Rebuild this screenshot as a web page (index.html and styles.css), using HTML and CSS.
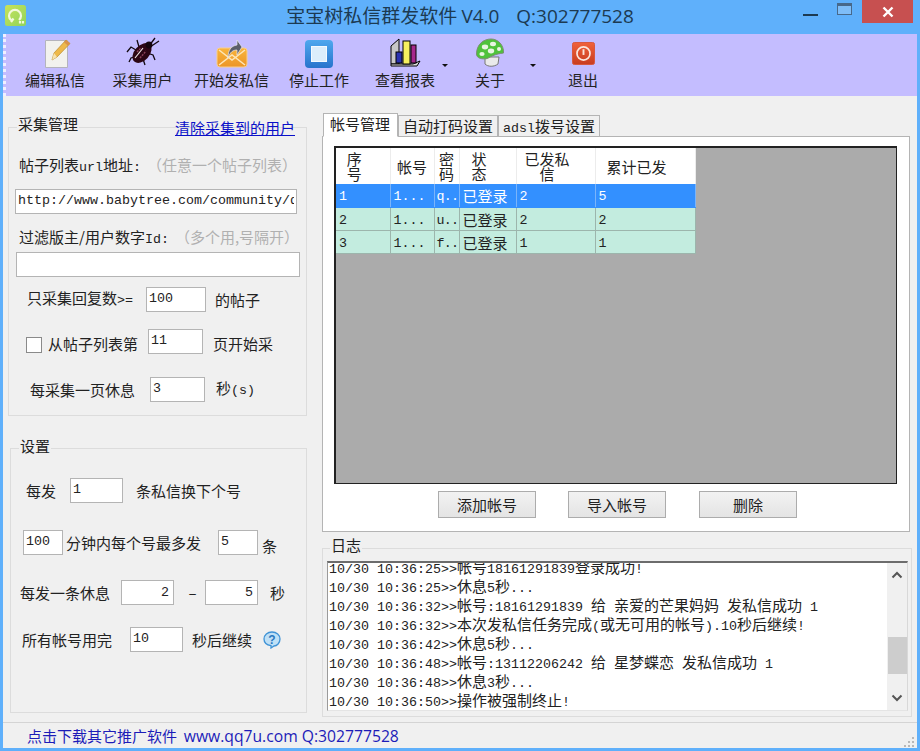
FILE: index.html
```html
<!DOCTYPE html>
<html lang="zh-CN">
<head>
<meta charset="utf-8">
<title>宝宝树私信群发软件</title>
<link rel="stylesheet" href="styles.css">
</head>
<body>
<div class="window">
  <header class="titlebar">
    <svg class="app-logo" width="21" height="21" viewBox="0 0 21 21"><defs><linearGradient id="lg" x1="0" y1="0" x2="1" y2="1"><stop offset="0" stop-color="#c9e35c"/><stop offset="1" stop-color="#8fd45a"/></linearGradient></defs><rect width="21" height="21" rx="2.500" fill="url(#lg)"/><path d="M6 15a6 5.800 0 1 1 8 0M8.500 13.500L6 17M15 16v2.500M18 16v2.500" fill="none" stroke="#f2f9dc" stroke-width="2.200"/></svg>
    <div class="title">宝宝树私信群发软件 <span class="title-latin">V4.0&nbsp; Q:302777528</span></div>
    <div class="win-btns">
      <span class="win-min"></span>
      <span class="win-max"></span>
      <span class="win-close"><svg width="12" height="12" viewBox="0 0 12 12"><path d="M1.500 1.500l9 9M10.500 1.500l-9 9" stroke="#fff" stroke-width="2.400"/></svg></span>
    </div>
  </header>

  <nav class="toolbar">
    <div class="tool">
      <svg class="ico" width="32" height="30" viewBox="0 0 32 30"><path d="M6.500 2.500h22v27h-22z" fill="#f2f2ee" stroke="#b4b4bc"/><path d="M13 22l2-7L27 2l4 3.500L18 19z" fill="#eeb94a" stroke="#b98a2c" stroke-width=".7"/><path d="M27 2l4 3.500-2 2.200-4-3.500z" fill="#d9924a"/><path d="M13 22l2-7 3 4z" fill="#f6e3b0"/></svg>
      <span>编辑私信</span>
    </div>
    <div class="tool">
      <svg class="ico" width="36" height="31" viewBox="0 0 36 31"><g stroke="#120810" stroke-width="1.300" fill="none"><path d="M24 9l6-8M25 10l9-6M11 13l-5-3-4 5M12 19l-6 2-2 4M18 22l2 6M22 16l6 2 2 5M14 10l-2-7"/></g><ellipse cx="17" cy="16" rx="7.500" ry="11.500" transform="rotate(42 17 16)" fill="#2c0614"/><circle cx="24" cy="8" r="3.400" fill="#14060c"/><path d="M10 21l8-10" stroke="#f0e6e6" stroke-width="1.200"/><path d="M15 21l6-7M12 15l4-4" stroke="#8a4058" stroke-width="1.400" stroke-dasharray="2 1"/></svg>
      <span>采集用户</span>
    </div>
    <div class="tool">
      <svg class="ico" width="32" height="30" viewBox="0 0 32 30"><defs><linearGradient id="eb" x1="0" y1="0" x2="0" y2="1"><stop offset="0" stop-color="#f9b53c"/><stop offset="1" stop-color="#ec9526"/></linearGradient></defs><rect x="1" y="10" width="30" height="19" rx="3" fill="url(#eb)" stroke="#f8cf8e"/><path d="M3 27l13-10 13 10M3 12l13 10 13-10" fill="none" stroke="#fde6b8" stroke-width="1.500"/><path d="M12 20c0-8 3-12 9-13V2l5 7-5 8v-5c-4 0-7 2-9 8z" fill="#5b5f6b" stroke="#e9e9f2" stroke-width=".7"/></svg>
      <span>开始发私信</span>
    </div>
    <div class="tool">
      <svg class="ico" width="28" height="28" viewBox="0 0 28 28"><defs><linearGradient id="sb" x1="0" y1="0" x2="0" y2="1"><stop offset="0" stop-color="#4fa8ee"/><stop offset="1" stop-color="#2773cc"/></linearGradient></defs><rect width="28" height="28" rx="4" fill="url(#sb)"/><rect x="6.500" y="6.500" width="15" height="15" fill="#dceefb" stroke="#f4faff"/></svg>
      <span>停止工作</span>
    </div>
    <div class="tool">
      <svg class="ico" width="32" height="30" viewBox="0 0 32 30"><path d="M2 8L10 1v25H2z" fill="#c8c8c8" stroke="#000"/><path d="M2 26h22l7-3-3 5H2z" fill="#dcdcdc" stroke="#000"/><rect x="7" y="14" width="6" height="11" fill="#2a32b0" stroke="#000"/><rect x="14" y="3" width="7" height="23" fill="#f6f060" stroke="#000"/><rect x="22" y="7" width="5" height="18" fill="#a5288c" stroke="#000"/></svg>
      <span>查看报表</span>
      <i class="caret"></i>
    </div>
    <div class="tool">
      <svg class="ico" width="30" height="30" viewBox="0 0 30 30"><path d="M10 19h14l-1 7c-4 3-10 3-13 0z" fill="#eaeaea" stroke="#777"/><path d="M1.500 16C1.500 6 9 1 16 1c7 0 13 6 12.500 14-8 1-12 3-16 5.500-5 1-11 0-11-4.500z" fill="#4fc23c" stroke="#7a8f72"/><g fill="#e8f5e2"><ellipse cx="10" cy="9" rx="3.200" ry="2.400"/><ellipse cx="18" cy="6" rx="3" ry="2.200"/><ellipse cx="16" cy="13" rx="3.200" ry="2.400"/><ellipse cx="7" cy="16" rx="2.600" ry="2"/><ellipse cx="24" cy="11" rx="2" ry="2"/></g></svg>
      <span>关于</span>
      <i class="caret"></i>
    </div>
    <div class="tool">
      <svg class="ico ico-low" width="23" height="23" viewBox="0 0 24 24"><defs><linearGradient id="rb" x1="0" y1="0" x2="0" y2="1"><stop offset="0" stop-color="#f0623a"/><stop offset="1" stop-color="#c83c20"/></linearGradient></defs><rect x=".5" y=".5" width="23" height="23" rx="2" fill="url(#rb)" stroke="#d8563a"/><circle cx="12" cy="12" r="6.800" fill="none" stroke="#fbe6dc" stroke-width="1.800"/><path d="M12 7.500v6" stroke="#fbe6dc" stroke-width="2"/></svg>
      <span>退出</span>
    </div>
  </nav>

  <main class="main">
    <section class="left">
      <div class="group g1">
        <div class="g-head">
          <span class="legend">采集管理</span>
          <a class="clear-link" href="#">清除采集到的用户</a>
        </div>
        <div class="lab lab1">帖子列表<span class="m">url</span>地址<span class="m">:</span><span class="hint">（任意一个帖子列表）</span></div>
        <input class="field url" value="http://www.babytree.com/community/d">
        <div class="lab lab2">过滤版主/用户数字<span class="m">Id:</span><span class="hint">（多个用,号隔开）</span></div>
        <input class="field filter" value="">
        <div class="row r3"><span>只采集回复数<span class="m">&gt;=</span></span><input class="field w60" value="100"><span class="after">的帖子</span></div>
        <div class="row r4"><span class="check"></span><span>从帖子列表第</span><input class="field w55" value="11"><span class="after">页开始采</span></div>
        <div class="row r5"><span>每采集一页休息</span><input class="field w55" value="3"><span class="after">秒<span class="m">(s)</span></span></div>
      </div>

      <div class="group g2">
        <span class="legend legend2">设置</span>
        <div class="row s1"><span>每发</span><input class="field w53" value="1"><span class="a13">条私信换下个号</span></div>
        <div class="row s2"><input class="field w40" value="100"><span class="a3">分钟内每个号最多发</span><input class="field w40 a17" value="5"><span class="tail">条</span></div>
        <div class="row s3"><span>每发一条休息</span><input class="field w53 num a11" value="2"><span class="dash">–</span><input class="field w53 num" value="5"><span class="a12">秒</span></div>
        <div class="row s4"><span>所有帐号用完</span><input class="field w53 a18" value="10"><span class="a9">秒后继续</span>
          <svg class="help" width="18" height="18" viewBox="0 0 18 18"><path d="M9 1c4.500 0 8 3 8 7s-3 7-6 7l-3 2v-2.300C4 14 1 12 1 8c0-4 3.500-7 8-7z" fill="#bfe0f6" stroke="#3f93d6" stroke-width="1.300"/><text x="9" y="12.500" text-anchor="middle" class="help-q">?</text></svg>
        </div>
      </div>
    </section>

    <section class="right">
      <div class="tabs">
        <span class="tab active">帐号管理</span>
        <span class="tab">自动打码设置</span>
        <span class="tab"><span class="m">adsl</span>拨号设置</span>
      </div>
      <div class="panel">
        <div class="grid-view">
          <table class="accounts">
            <colgroup><col class="c1"><col class="c2"><col class="c3"><col class="c4"><col class="c5"><col class="c6"></colgroup>
            <thead>
              <tr><th class="ph">序<br>号</th><th>帐号</th><th>密<br>码</th><th class="ph">状<br>态</th><th class="ph">已发私<br>信</th><th class="ph">累计已发</th></tr>
            </thead>
            <tbody>
              <tr class="sel"><td>1</td><td>1...</td><td class="pw">q..</td><td class="st">已登录</td><td>2</td><td>5</td></tr>
              <tr><td>2</td><td>1...</td><td class="pw">u..</td><td class="st">已登录</td><td>2</td><td>2</td></tr>
              <tr><td>3</td><td>1...</td><td class="pw">f..</td><td class="st">已登录</td><td>1</td><td>1</td></tr>
            </tbody>
          </table>
        </div>
        <div class="actions">
          <button class="btn">添加帐号</button>
          <button class="btn">导入帐号</button>
          <button class="btn">删除</button>
        </div>
      </div>

      <div class="group log-group">
        <span class="legend legend3">日志</span>
        <div class="log-box">
          <div class="log-text">
            <div>10/30 10:36:25&gt;&gt;<b>帐号</b>18161291839<b>登录成功</b>!</div>
            <div>10/30 10:36:25&gt;&gt;<b>休息</b>5<b>秒</b>...</div>
            <div>10/30 10:36:32&gt;&gt;<b>帐号</b>:18161291839 <b>给</b> <b>亲爱的芒果妈妈</b> <b>发私信成功</b> 1</div>
            <div>10/30 10:36:32&gt;&gt;<b>本次发私信任务完成</b>(<b>或无可用的帐号</b>).10<b>秒后继续</b>!</div>
            <div>10/30 10:36:42&gt;&gt;<b>休息</b>5<b>秒</b>...</div>
            <div>10/30 10:36:48&gt;&gt;<b>帐号</b>:13112206242 <b>给</b> <b>星梦蝶恋</b> <b>发私信成功</b> 1</div>
            <div>10/30 10:36:48&gt;&gt;<b>休息</b>3<b>秒</b>...</div>
            <div>10/30 10:36:50&gt;&gt;<b>操作被强制终止</b>!</div>
          </div>
          <div class="scrollbar">
            <svg width="12" height="8" viewBox="0 0 12 8"><path d="M1.500 6.500L6 2l4.500 4.500" fill="none" stroke="#555" stroke-width="2"/></svg>
            <span class="thumb"></span>
            <svg width="12" height="8" viewBox="0 0 12 8"><path d="M1.500 1.500L6 6l4.500-4.500" fill="none" stroke="#555" stroke-width="2"/></svg>
          </div>
        </div>
      </div>
    </section>
  </main>

  <footer class="status">
    <a class="promo" href="#">点击下载其它推广软件&nbsp; <span class="promo-latin">www.qq7u.com Q:302777528</span></a>
    <svg class="grip" width="12" height="12" viewBox="0 0 12 12"><g fill="#b8b8b8"><rect x="9" y="1" width="2" height="2"/><rect x="5" y="5" width="2" height="2"/><rect x="9" y="5" width="2" height="2"/><rect x="1" y="9" width="2" height="2"/><rect x="5" y="9" width="2" height="2"/><rect x="9" y="9" width="2" height="2"/></g></svg>
  </footer>
</div>
</body>
</html>
```

FILE: styles.css
```css
* { box-sizing: border-box; }
html, body { margin: 0; padding: 0; }
body {
  width: 920px;
  height: 751px;
  overflow: hidden;
  font: 15px/20px "Noto Sans CJK SC", sans-serif;
  color: #222;
}
.window {
  width: 920px;
  height: 751px;
  display: flex;
  flex-direction: column;
  background: #5fb0fb;
  padding: 0 3px 3px;
}
.m { font: 13.33px/20px "Liberation Mono", monospace; }

/* title bar */
.titlebar {
  height: 34px;
  flex: none;
  display: flex;
  align-items: flex-start;
  margin: 0 -3px;
  padding-left: 5px;
}
.app-logo { margin-top: 5px; flex: none; }
.title {
  flex: 1;
  text-align: center;
  font-size: 19px;
  line-height: 30px;
  color: #1c3a52;
  padding-left: 91px;
  white-space: nowrap;
}
.title-latin { font: 19px/30px "Open Sans", sans-serif; word-spacing: 3.5px; }
.win-btns { display: flex; align-items: flex-start; flex: none; margin-right: 7px; }
.win-min { width: 15px; height: 2px; background: #1c3a52; margin: 14px 19px 0 0; }
.win-max { width: 15px; height: 12px; border: 1px solid #47688a; border-top-width: 3px; margin: 3px 10px 0 0; background: #7ebdf8; }
.win-close { width: 51px; height: 23px; background: #c75050; display: flex; align-items: center; justify-content: center; }

/* tool bar */
.toolbar {
  height: 62px;
  flex: none;
  background: #c4bdff;
  display: grid;
  grid-template-columns: 86px 89px 89px 86px 86px 84px 102px;
  padding-left: 6px;
  position: relative;
  border-left: 3px dotted #f0f0ff;
}
.tool {
  position: relative;
  display: flex;
  flex-direction: column;
  align-items: center;
  justify-content: flex-end;
  color: #222;
  padding-bottom: 6px;
}
.tool span { height: 20px; }
.ico { flex: none; margin-bottom: 2px; }
.ico-low { margin-bottom: 5px; }
.caret {
  position: absolute;
  right: 0;
  top: 30px;
  width: 0;
  height: 0;
  border: 3px solid transparent;
  border-top: 3px solid #111;
}
.tool:nth-child(6) .caret { right: -4px; }

/* main */
.main {
  height: 627px;
  flex: none;
  background: #f0f0f0;
  display: flex;
  border-bottom: 1px solid #d4d4d4;
}
.left { width: 319px; flex: none; }
.right { width: 592px; flex: none; padding-top: 17px; }

.group { border: 1px solid #dcdcdc; }
.g1 { margin: 31px 0 0 5px; width: 299px; height: 289px; }
.g2 { margin: 32px 0 0 7px; width: 297px; height: 265px; }
.g-head { display: flex; justify-content: space-between; height: 20px; margin-top: -14px; padding: 0 11px 0 8px; }
.legend { background: #f0f0f0; padding: 0 1px; }
.clear-link { color: #0a10c8; text-decoration: underline; margin-top: 4px; }
.legend2 { display: block; width: max-content; margin: -13px 0 0 8px; }
.legend3 { display: block; width: max-content; margin: -14px 0 0 3px; }
.hint { color: #b0b0b0; margin-left: 6px; }
.lab { margin-left: 10px; white-space: nowrap; }
.lab1 { margin-top: 21px; }
.lab2 { margin-top: 13px; margin-bottom: 2px; }

.field {
  display: block;
  height: 25px;
  border: 1px solid #b4b4b4;
  background: #fff;
  padding: 0 2px 3px;
  font: 13.33px/18px "Liberation Mono", monospace;
  color: #222;
  outline: none;
  border-radius: 0;
  flex: none;
}
.url { width: 282px; margin: 11px 0 0 6px; }
.filter { width: 284px; margin: 0 0 0 7px; }
.num { text-align: right; padding: 0 4px 0 2px; }
.w60 { width: 60px; }
.w55 { width: 55px; }
.w53 { width: 53px; }
.w40 { width: 40px; }

.row { display: flex; align-items: center; white-space: nowrap; }
.after { margin-left: 9px; }
.r3 { margin: 10px 0 0 18px; }
.r3 .field { margin-left: 13px; }
.r4 { margin: 17px 0 0 17px; }
.r4 .field { margin-left: 10px; }
.r4 .after { margin-left: 10px; }
.check { width: 16px; height: 16px; border: 1px solid #8a8a8a; background: #fff; margin: 6px 6px 0 0; flex: none; }
.r4 > span:nth-child(2) { margin-top: 5px; }
.r4 .after { margin-top: 5px; }
.r5 { margin: 23px 0 0 21px; }
.r5 .field { margin-left: 15px; }
.r5 .after { margin-left: 11px; }

.s1 { margin: 22px 0 0 15px; }
.s1 .field { margin-left: 14px; }
.a13 { margin-left: 13px; }
.s2 { margin: 26px 0 0 12px; }
.a3 { margin-left: 3px; }
.a17 { margin-left: 17px; }
.tail { margin: 7px 0 0 4px; }
.s3 { margin: 24px 0 0 9px; }
.a11 { margin-left: 11px; }
.dash { width: 31px; text-align: center; padding-left: 6px; }
.a12 { margin-left: 12px; }
.s4 { margin: 22px 0 0 11px; }
.a18 { margin-left: 18px; }
.a9 { margin-left: 9px; }
.help { margin-left: 11px; }
.help-q { font: bold 12px "Liberation Sans", sans-serif; fill: #2a78c0; }

/* tabs */
.tabs { display: flex; align-items: flex-end; height: 24px; padding-left: 1px; position: relative; z-index: 1; margin-bottom: -1px; }
.tab {
  height: 22px;
  border: 1px solid #b4b4b4;
  background: #f0f0f0;
  padding: 0 4px;
  line-height: 19px;
  margin-right: 0;
  white-space: nowrap;
}
.tab:nth-child(2) { width: 100px; }
.tab:nth-child(3) { width: 102px; }
.tab.active { height: 24px; width: 75px; padding-left: 6px; background: #fff; border-bottom-color: #fff; line-height: 20px; }
.panel {
  width: 588px;
  height: 396px;
  border: 1px solid #b4b4b4;
  background: #fff;
  padding: 9px 11px 0;
}
.grid-view {
  width: 563px;
  height: 338px;
  background: #ababab;
  border: 1px solid #222;
  border-top-width: 2px;
  border-left-width: 2px;
}
.accounts { border-collapse: collapse; table-layout: fixed; width: 359px; }
.c1 { width: 54px; } .c2 { width: 44px; } .c3 { width: 25px; } .c4 { width: 57px; } .c5 { width: 79px; } .c6 { width: 100px; }
.accounts th {
  height: 36px;
  background: #fff;
  font-weight: 400;
  line-height: 15px;
  text-align: center;
  padding: 0;
  border-right: 1px solid #ececec;
}
.accounts th.ph { padding-right: 17px; }
.accounts td {
  height: 23px;
  padding: 4px 0 0 3px;
  background: #c3ecdf;
  border-right: 1px solid #9cb5ac;
  border-bottom: 1px solid #9cb5ac;
  font: 13.33px/16px "Liberation Mono", monospace;
  overflow: hidden;
  white-space: nowrap;
}
.accounts td.pw { padding-left: 2px; letter-spacing: -0.8px; }
.accounts td.st { padding-top: 2px; font: 15px/18px "Noto Sans CJK SC", sans-serif; }
.accounts tr.sel td { background: #3390ff; color: #fff; border-color: #3390ff; border-right-color: #7ab4fa; }
.actions { display: flex; padding: 7px 0 0 104px; }
.btn {
  width: 98px;
  height: 27px;
  margin-right: 32px;
  padding: 0;
  border: 1px solid #acacac;
  background: linear-gradient(#f2f2f2, #e4e4e4);
  font: 15px/20px "Noto Sans CJK SC", sans-serif;
  color: #222;
}
.btn:nth-child(2) { margin-right: 33px; }

/* log */
.log-group { width: 590px; height: 169px; margin-top: 16px; padding: 0 4px; }
.log-box {
  width: 581px;
  height: 150px;
  margin-top: 6px;
  background: #fff;
  border: 1px solid #9a9a9a;
  border-top: 2px solid #6c6c6c;
  border-bottom-color: #e4e4e4;
  border-right-color: #d8d8d8;
  display: flex;
  overflow: hidden;
}
.log-text {
  flex: 1;
  margin-top: -6px;
  padding-left: 1px;
  font: 13.33px/19px "Liberation Mono", monospace;
  color: #222;
  white-space: nowrap;
}
.log-text div { height: 19px; }
.log-text b { font: 400 15px/19px "Noto Sans CJK SC", sans-serif; }
.scrollbar {
  width: 20px;
  flex: none;
  background: #f0f0f0;
  display: flex;
  flex-direction: column;
  align-items: center;
  padding-top: 8px;
  position: relative;
}
.thumb { width: 19px; height: 37px; background: #cdcdcd; margin: 58px 0 20px; }

/* status */
.status {
  height: 25px;
  flex: none;
  background: #f0f0f0;
  display: flex;
  align-items: center;
  justify-content: space-between;
  padding: 0 2px 0 24px;
}
.promo { color: #1c1cb8; text-decoration: none; font: 15px/20px "Noto Sans CJK SC", sans-serif; white-space: nowrap; }
.promo-latin { font: 15.7px/20px "Open Sans", sans-serif; }
.grip { align-self: flex-end; }
```
